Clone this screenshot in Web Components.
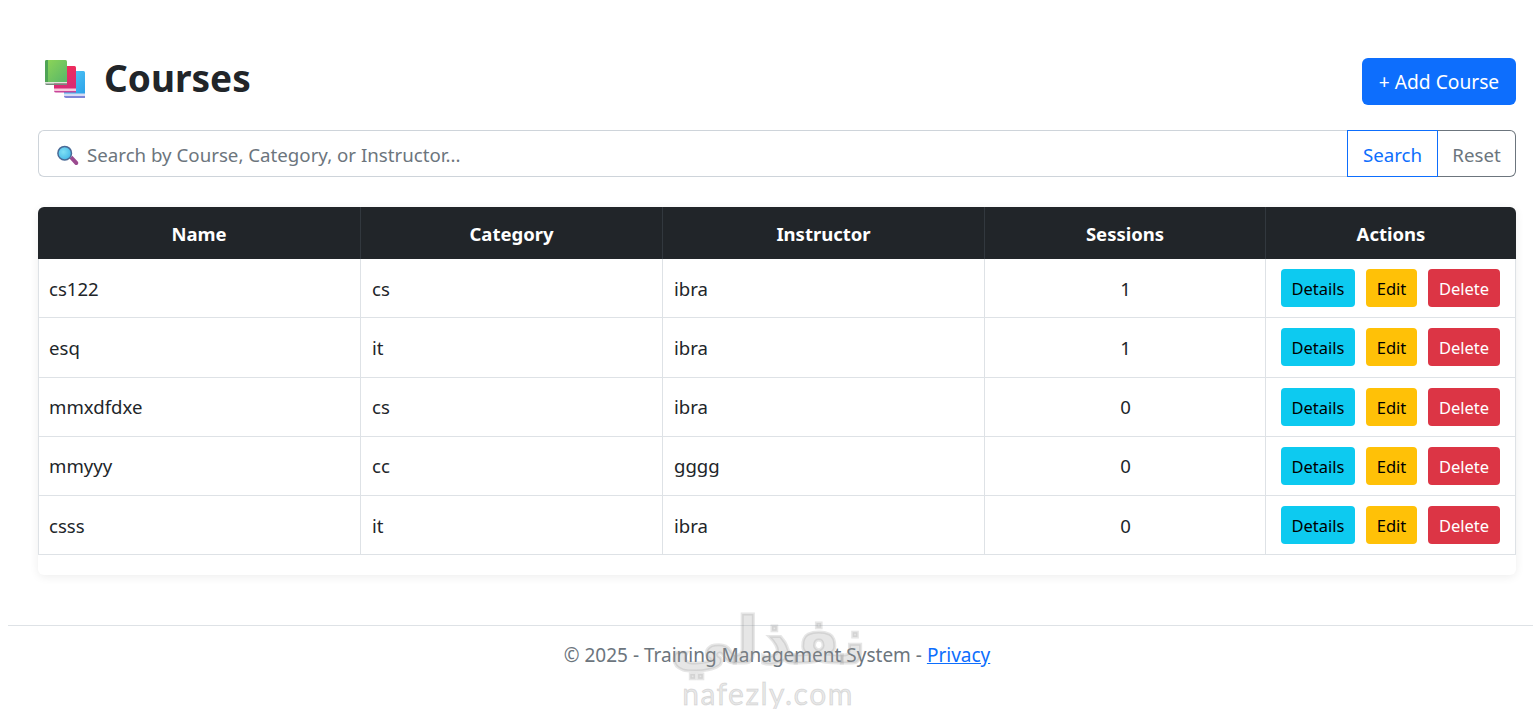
<!DOCTYPE html>
<html>
<head>
<meta charset="utf-8">
<title>Courses</title>
<style>
  html, body { margin: 0; background: #fff; }
  body {
    margin: 0 0 0 8px;
    font-family: "Noto Sans", "Liberation Sans", sans-serif;
    color: #212529;
    overflow: hidden;
  }
</style>
</head>
<body>
<app-page>
  <page-header title-text="Courses">
    <add-button>+ Add Course</add-button>
  </page-header>
  <search-bar></search-bar>
  <course-table>
    <course-row name="cs122" category="cs" instructor="ibra" sessions="1"></course-row>
    <course-row name="esq" category="it" instructor="ibra" sessions="1"></course-row>
    <course-row name="mmxdfdxe" category="cs" instructor="ibra" sessions="0"></course-row>
    <course-row name="mmyyy" category="cc" instructor="gggg" sessions="0"></course-row>
    <course-row name="csss" category="it" instructor="ibra" sessions="0"></course-row>
  </course-table>
</app-page>
<page-footer></page-footer>

<script>
const HEAD_COLS = "322px 302px 322px 281px 251px";
const ROW_COLS = "321px 302px 322px 281px 250px";

class AppPage extends HTMLElement {
  constructor() {
    super();
    this.attachShadow({ mode: "open" });
    this.shadowRoot.innerHTML = `
      <style>
        :host { display: block; padding: 58px 17px 0 30px; }
      </style>
      <slot></slot>
    `;
  }
}

class PageHeader extends HTMLElement {
  constructor() {
    super();
    this.attachShadow({ mode: "open" });
    this.shadowRoot.innerHTML = `
      <style>
        :host { display: flex; justify-content: space-between; align-items: center; height: 47px; }
        h1 { margin: 0 0 8px; display: flex; align-items: center; gap: 18px; font-size: 37px; font-weight: 700; line-height: 44px; }
        svg { margin: 2px 0 0 6px; display: block; }
      </style>
      <h1>
        <svg width="42" height="42" viewBox="0 0 42 42">
          <defs>
            <linearGradient id="g" x1="0" y1="0" x2="1" y2="1"><stop offset="0" stop-color="#8fd656"/><stop offset="1" stop-color="#56b56a"/></linearGradient>
            <linearGradient id="r" x1="0" y1="0" x2="0" y2="1"><stop offset="0" stop-color="#ee2c5c"/><stop offset="1" stop-color="#d42a78"/></linearGradient>
            <linearGradient id="b" x1="0" y1="0" x2="1" y2="1"><stop offset="0" stop-color="#56cdf8"/><stop offset="1" stop-color="#2a9fe8"/></linearGradient>
          </defs>
          <rect x="20" y="13" width="21" height="26" rx="1.500" fill="url(#b)"/>
          <path d="M20 35.500h21V38H20z" fill="#d9dcf5"/>
          <path d="M20 38h21v2H22a2 2 0 0 1-2-2z" fill="#7f86d8"/>
          <rect x="10" y="8" width="22" height="24" rx="1.500" fill="url(#r)"/>
          <path d="M10 30.500h22V33H10z" fill="#f8c8dc"/>
          <path d="M10 33h22v1.500H12a2 2 0 0 1-2-1.500z" fill="#c8459a"/>
          <rect x="1" y="2" width="22" height="23" rx="1.500" fill="url(#g)"/>
          <path d="M1 3.500a1.500 1.500 0 0 1 1.500-1.500H4v23H1z" fill="#4fa455"/>
          <path d="M1 24h22v1.500H1z" fill="#e2e6dc"/>
          <path d="M1 25.500h22V27H3a2 2 0 0 1-2-1.500z" fill="#75897c"/>
        </svg>
        <span>${this.getAttribute("title-text")}</span>
      </h1>
      <slot></slot>
    `;
  }
}

class AddButton extends HTMLElement {
  constructor() {
    super();
    this.attachShadow({ mode: "open" });
    this.shadowRoot.innerHTML = `
      <style>
        :host { display: block; width: 154px; height: 47px; box-sizing: border-box; background: #0d6efd; color: #fff; border-radius: 6px; font-size: 19.200px; line-height: 47px; text-align: center; }
      </style>
      <slot></slot>
    `;
  }
}

class SearchBar extends HTMLElement {
  constructor() {
    super();
    this.attachShadow({ mode: "open" });
    this.shadowRoot.innerHTML = `
      <style>
        :host { display: flex; height: 47px; margin-top: 25px; font-size: 18.700px; }
        .field { flex: 1; display: flex; align-items: center; gap: 7px; padding-left: 17px; border: 1px solid #ced4da; border-right: 0; border-radius: 6px 0 0 6px; color: #6c757d; min-width: 0; }
        .field span { padding-top: 2px; }
        .btn { display: flex; align-items: center; justify-content: center; box-sizing: border-box; border: 1px solid; padding-top: 2px; }
        .search { width: 91px; color: #0d6efd; border-color: #0d6efd; }
        .reset { width: 79px; margin-left: -1px; color: #6c757d; border-color: #6c757d; border-radius: 0 6px 6px 0; border-left-color: #0d6efd; }
        svg { display: block; flex: none; }
      </style>
      <div class="field">
        <svg width="24" height="24" viewBox="0 0 24 24">
          <defs><radialGradient id="lens" cx=".4" cy=".4" r=".7"><stop offset="0" stop-color="#7fe0f5"/><stop offset="1" stop-color="#3fb4e6"/></radialGradient></defs>
          <path d="M13.500 16.500l2.800-2.800 5.400 5.900a1.900 1.900 0 0 1-2.800 2.800z" fill="#9b4a8f"/>
          <circle cx="8.700" cy="11.200" r="6.800" fill="url(#lens)" stroke="#4a6a96" stroke-width="1.500"/>
        </svg>
        <span>Search by Course, Category, or Instructor...</span>
      </div>
      <div class="btn search">Search</div>
      <div class="btn reset">Reset</div>
    `;
  }
}

class CourseTable extends HTMLElement {
  constructor() {
    super();
    this.attachShadow({ mode: "open" });
    this.shadowRoot.innerHTML = `
      <style>
        :host { display: block; margin-top: 30px; padding-bottom: 20px; border-radius: 6px; box-shadow: 0 2px 10px rgba(0,0,0,.07); font-size: 18.600px; }
        .head { display: grid; grid-template-columns: ${HEAD_COLS}; height: 52px; background: #212529; color: #fff; border-radius: 6px 6px 0 0; font-weight: 700; font-size: 18.500px; }
        .head div { display: flex; align-items: center; justify-content: center; border-left: 1px solid #32383e; }
        .head div:first-child { border-left: 0; }
      </style>
      <div class="head"><div>Name</div><div>Category</div><div>Instructor</div><div>Sessions</div><div>Actions</div></div>
      <slot></slot>
    `;
  }
}

class CourseRow extends HTMLElement {
  constructor() {
    super();
    this.attachShadow({ mode: "open" });
    const a = (n) => this.getAttribute(n);
    this.shadowRoot.innerHTML = `
      <style>
        :host { display: grid; grid-template-columns: ${ROW_COLS}; height: 59.250px; box-sizing: border-box; border-bottom: 1px solid #dee2e6; border-left: 1px solid #dee2e6; border-right: 1px solid #dee2e6; }
        .c { display: flex; align-items: center; padding-left: 11px; border-left: 1px solid #dee2e6; }
        .first { border-left: 0; padding-left: 10px; }
        .n { justify-content: center; padding: 0 0 0 1px; }
        .act { gap: 11px; padding-left: 15px; }
        .b { height: 38px; line-height: 39px; border-radius: 4px; font-size: 16.500px; text-align: center; color: #000; }
        .info { width: 74px; background: #0dcaf0; }
        .warn { width: 51px; background: #ffc107; }
        .del { width: 72px; background: #dc3545; color: #fff; }
      </style>
      <div class="c first">${a("name")}</div>
      <div class="c">${a("category")}</div>
      <div class="c">${a("instructor")}</div>
      <div class="c n">${a("sessions")}</div>
      <div class="c act"><div class="b info">Details</div><div class="b warn">Edit</div><div class="b del">Delete</div></div>
    `;
  }
}

class PageFooter extends HTMLElement {
  constructor() {
    super();
    this.attachShadow({ mode: "open" });
    this.shadowRoot.innerHTML = `
      <style>
        :host { display: block; position: relative; margin-top: 50px; height: 84px; border-top: 1px solid #dee2e6; font-size: 19px; color: #6c757d; }
        p { margin: 0; padding-top: 16px; padding-left: 13px; line-height: 27px; text-align: center; }
        a { color: #0d6efd; }
        .mark { position: absolute; left: 662px; top: -22px; width: 196px; text-align: center; color: rgba(150,150,150,.24); line-height: 1; pointer-events: none; }
        .ar { font: 700 64px "DejaVu Sans", sans-serif; -webkit-text-stroke: 3px rgba(150,150,150,.24); line-height: 68px; padding-top: 3px; }
        .en { font: 400 30px "Lato", sans-serif; letter-spacing: 1.500px; -webkit-text-stroke: 1px rgba(150,150,150,.24); }
      </style>
      <p>© 2025 - Training Management System - <a href="#">Privacy</a></p>
      <div class="mark"><div class="ar" lang="ar" dir="rtl">نفذلي</div><div class="en">nafezly.com</div></div>
    `;
  }
}

customElements.define("app-page", AppPage);
customElements.define("page-header", PageHeader);
customElements.define("add-button", AddButton);
customElements.define("search-bar", SearchBar);
customElements.define("course-table", CourseTable);
customElements.define("course-row", CourseRow);
customElements.define("page-footer", PageFooter);
</script>
</body>
</html>
